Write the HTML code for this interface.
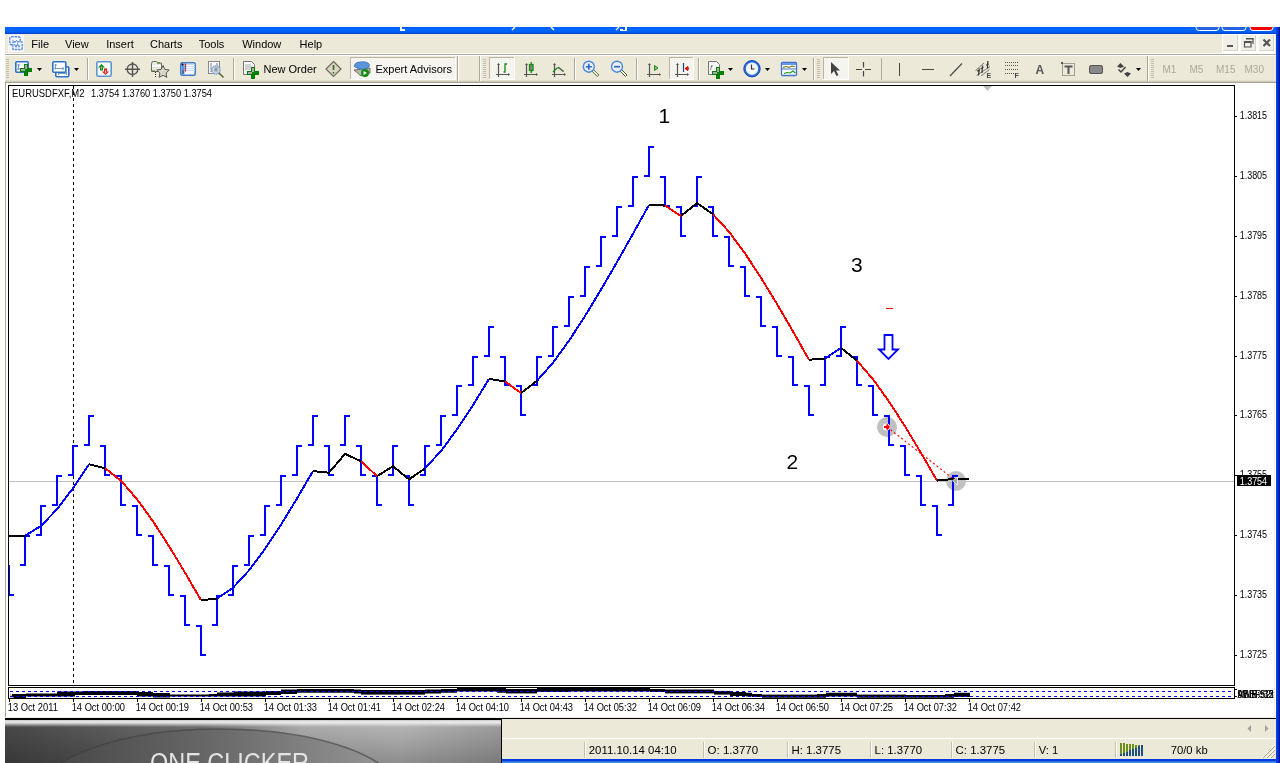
<!DOCTYPE html>
<html><head><meta charset="utf-8"><style>
html,body{margin:0;padding:0;background:#fff;width:1280px;height:763px;overflow:hidden;}
svg{position:absolute;left:0;top:0;will-change:transform;}
</style></head><body>
<svg width="1280" height="763" viewBox="0 0 1280 763">
<defs>
<linearGradient id="tb" x1="0" y1="0" x2="0" y2="1"><stop offset="0" stop-color="#0058F8"/><stop offset="0.25" stop-color="#0066FF"/><stop offset="0.7" stop-color="#0062F8"/><stop offset="1" stop-color="#003CC8"/></linearGradient>
<linearGradient id="rb" x1="0" y1="0" x2="1" y2="0"><stop offset="0" stop-color="#0046FF"/><stop offset="0.45" stop-color="#0034D8"/><stop offset="1" stop-color="#000E88"/></linearGradient>
</defs>
<rect x="5" y="27" width="1275" height="7" fill="url(#tb)" shape-rendering="crispEdges"/>
<rect x="1196" y="20" width="23" height="10.5" rx="3" fill="#2663E0" stroke="#FFF" stroke-width="1"/><rect x="1222" y="20" width="24" height="10.5" rx="3" fill="#2663E0" stroke="#FFF" stroke-width="1"/><rect x="1250" y="20" width="23" height="10.5" rx="3" fill="#F00000" stroke="#FFF" stroke-width="1"/><rect x="0" y="0" width="1280" height="27" fill="#FFFFFF" shape-rendering="crispEdges" /><rect x="400" y="27" width="2" height="3" fill="#FFF" shape-rendering="crispEdges" /><rect x="400" y="29" width="5" height="2" fill="#FFF" shape-rendering="crispEdges" /><path d="M515,27 l-3,3" stroke="#FFF" stroke-width="1.5"/><path d="M551,27 l3,3" stroke="#FFF" stroke-width="1.5"/><path d="M619,27 l-3,3" stroke="#FFF" stroke-width="1.5"/><rect x="620" y="29" width="3" height="2" fill="#FFF" shape-rendering="crispEdges" /><rect x="625" y="27" width="2" height="4" fill="#FFF" shape-rendering="crispEdges" /><rect x="622" y="30" width="5" height="1" fill="#FFF" shape-rendering="crispEdges" />
<rect x="1276" y="27" width="4" height="736" fill="url(#rb)" shape-rendering="crispEdges"/>
<rect x="5" y="34" width="1271" height="20" fill="#ECE9D8" shape-rendering="crispEdges"/>
<rect x="5" y="53" width="1271" height="1" fill="#FFFFFF" shape-rendering="crispEdges"/><rect x="5" y="54" width="1271" height="1" fill="#ACA899" shape-rendering="crispEdges"/>
<rect x="5" y="55" width="1271" height="1" fill="#FFFFFF" shape-rendering="crispEdges"/>
<rect x="8" y="35" width="16" height="17" fill="#F8F8F8" shape-rendering="crispEdges" /><rect x="9.8" y="36.8" width="10.4" height="8" rx="1.5" fill="#FFF" stroke="#5A8CF0" stroke-width="1.5" stroke-dasharray="2.5,0.8"/><path d="M12.5,41 l1,-1.2 M16,39.8 l1,1.2" stroke="#5A8CF0" stroke-width="1"/><rect x="12.8" y="41.8" width="9.4" height="7.6" rx="1" fill="#FFF" stroke="#5A8CF0" stroke-width="1.5" stroke-dasharray="2.5,0.8"/><path d="M14.5,44 l1.5,3 1.5,-3 1.5,3 1,-1.5" stroke="#5A8CF0" stroke-width="1.1" fill="none"/><text x="31.3" y="48" font-size="11" font-family="Liberation Sans, sans-serif" fill="#000">File</text><text x="65" y="48" font-size="11" font-family="Liberation Sans, sans-serif" fill="#000">View</text><text x="106.2" y="48" font-size="11" font-family="Liberation Sans, sans-serif" fill="#000">Insert</text><text x="150" y="48" font-size="11" font-family="Liberation Sans, sans-serif" fill="#000">Charts</text><text x="198.7" y="48" font-size="11" font-family="Liberation Sans, sans-serif" fill="#000">Tools</text><text x="242.2" y="48" font-size="11" font-family="Liberation Sans, sans-serif" fill="#000">Window</text><text x="299.6" y="48" font-size="11" font-family="Liberation Sans, sans-serif" fill="#000">Help</text><rect x="1222" y="34" width="53" height="19" fill="#FFFFFF" shape-rendering="crispEdges" /><rect x="1223" y="35" width="15" height="16" fill="#F1EFE6" shape-rendering="crispEdges" /><rect x="1223" y="50" width="15" height="1" fill="#D9D5C5" shape-rendering="crispEdges" /><rect x="1237" y="35" width="1" height="16" fill="#D9D5C5" shape-rendering="crispEdges" /><rect x="1241" y="35" width="15" height="16" fill="#F1EFE6" shape-rendering="crispEdges" /><rect x="1241" y="50" width="15" height="1" fill="#D9D5C5" shape-rendering="crispEdges" /><rect x="1255" y="35" width="1" height="16" fill="#D9D5C5" shape-rendering="crispEdges" /><rect x="1259" y="35" width="15" height="16" fill="#F1EFE6" shape-rendering="crispEdges" /><rect x="1259" y="50" width="15" height="1" fill="#D9D5C5" shape-rendering="crispEdges" /><rect x="1273" y="35" width="1" height="16" fill="#D9D5C5" shape-rendering="crispEdges" /><rect x="1227" y="45" width="6" height="2" fill="#555" shape-rendering="crispEdges" /><path d="M1244.5,41.5 h6.5 v5.5 h-6.5 z" fill="none" stroke="#555" stroke-width="1.2"/><rect x="1244" y="41" width="7.5" height="2" fill="#555"/><path d="M1246.5,38.5 h6.5 v5.5" fill="none" stroke="#555" stroke-width="1.2"/><rect x="1246" y="38" width="7.5" height="1.5" fill="#555"/><path d="M1263.5,39.5 l6.5,6.5 M1270,39.5 l-6.5,6.5" stroke="#555" stroke-width="2.2"/>
<rect x="5" y="56" width="1271" height="25" fill="#ECE9D8" shape-rendering="crispEdges"/>
<rect x="5" y="80" width="1271" height="1" fill="#E2DFCF" shape-rendering="crispEdges"/><rect x="5" y="81" width="1271" height="1" fill="#CFCBB8" shape-rendering="crispEdges"/><rect x="5" y="82" width="1271" height="1" fill="#A5A28F" shape-rendering="crispEdges"/>
<rect x="6" y="59" width="3" height="1" fill="#C1BDAA" shape-rendering="crispEdges" /><rect x="6" y="61" width="3" height="1" fill="#C1BDAA" shape-rendering="crispEdges" /><rect x="6" y="63" width="3" height="1" fill="#C1BDAA" shape-rendering="crispEdges" /><rect x="6" y="65" width="3" height="1" fill="#C1BDAA" shape-rendering="crispEdges" /><rect x="6" y="67" width="3" height="1" fill="#C1BDAA" shape-rendering="crispEdges" /><rect x="6" y="69" width="3" height="1" fill="#C1BDAA" shape-rendering="crispEdges" /><rect x="6" y="71" width="3" height="1" fill="#C1BDAA" shape-rendering="crispEdges" /><rect x="6" y="73" width="3" height="1" fill="#C1BDAA" shape-rendering="crispEdges" /><rect x="6" y="75" width="3" height="1" fill="#C1BDAA" shape-rendering="crispEdges" /><rect x="6" y="77" width="3" height="1" fill="#C1BDAA" shape-rendering="crispEdges" /><rect x="15.8" y="61.8" width="12.4" height="10.4" fill="#FFFFFF" stroke="#2E72C8" stroke-width="1.6" rx="1"/><path d="M18.5,64 v6 M17,65 h3 M17,69 h3" stroke="#7A9CC0" fill="none" stroke-width="1.1"/><path d="M24.0,64.0 h4.0 v4.0 h4.0 v4.0 h-4.0 v4.0 h-4.0 v-4.0 h-4.0 v-4.0 h4.0 z" fill="#008000" shape-rendering="crispEdges"/><rect x="25.0" y="65.0" width="2" height="4" fill="#B4A4AC" shape-rendering="crispEdges" /><rect x="21.0" y="69.0" width="4" height="2" fill="#ACA8B8" shape-rendering="crispEdges" /><path d="M37,68 h5 l-2.5,3 z" fill="#000"/><rect x="55.8" y="66.8" width="13" height="10" rx="1" fill="#FFF" stroke="#2E72C8" stroke-width="1.6"/><path d="M58,73.5 h9 M58.5,72 v3 M66.5,72 v3" stroke="#7A9CC0" stroke-width="1.1" fill="none"/><rect x="52.8" y="61.8" width="13" height="10.4" rx="1" fill="#FFF" stroke="#2E72C8" stroke-width="1.6"/><path d="M55.5,64 v5.5 M54,68.5 h10 M54.5,65 h2.5 M63,67 v3" stroke="#7A9CC0" stroke-width="1.1" fill="none"/><path d="M74,68 h5 l-2.5,3 z" fill="#000"/><rect x="87" y="58" width="1" height="22" fill="#ACA899" shape-rendering="crispEdges" /><rect x="88" y="58" width="1" height="22" fill="#FFFFFF" shape-rendering="crispEdges" /><rect x="96.8" y="61.8" width="14.4" height="14.4" rx="1.5" fill="#FFFFFF" stroke="#5C95D6" stroke-width="1.6"/><path d="M98,67.5 L101.5,64 L105,67.5 H103 V70.5 H100 V67.5 Z" fill="#0A8A0A"/><path d="M101.5,66 v3.5 M100.5,67.5 h2" stroke="#B0B0A0" stroke-width="0.8"/><path d="M102,71.5 L105.5,75 L109,71.5 H107 V68.5 H104 V71.5 Z" fill="#F01010"/><path d="M105.5,70 v3.5 M104.5,72 h2" stroke="#C0D0C0" stroke-width="0.8"/><g stroke="#555" fill="none"><circle cx="132.5" cy="69.3" r="5.3" stroke-width="1.3"/><path d="M132.5,62 v15 M125,69.3 h15" stroke-width="1.5"/></g><path d="M151.5,63.5 q0,-2 2,-2 h3 l1.5,1.5 h3.5 v8.5 h-10 z" fill="#E8E6DA" stroke="#666" stroke-width="1"/><rect x="152" y="65" width="9" height="2" fill="#FFF"/><path d="M152,71 h3 M157,63 h3" stroke="#4A7A10" stroke-width="1"/><path d="M155.5,72 v6" stroke="#333" stroke-dasharray="1,1" stroke-width="1"/><path d="M163,65.5 l1.9,3.9 4.3,.6 -3.1,3 .7,4.3 -3.8,-2 -3.8,2 .7,-4.3 -3.1,-3 4.3,-.6 z" fill="#D8D6C8" stroke="#555" stroke-width="1"/><rect x="180.8" y="62.8" width="14.4" height="12.4" rx="1.5" fill="#FFF" stroke="#3D7CC8" stroke-width="1.6"/><rect x="181.5" y="63.5" width="3" height="11" fill="#5E96E8"/><rect x="182.5" y="70" width="1" height="4" fill="#444"/><path d="M187,64.5 h8 M187,66.5 h8 M187,68.5 h8 M187,70.5 h8" stroke="#C8DAF4" stroke-width="1"/><circle cx="185.5" cy="64.5" r="0.9" fill="#F00"/><circle cx="185.5" cy="66.5" r="0.9" fill="#444"/><circle cx="185.5" cy="68.5" r="0.9" fill="#444"/><circle cx="185.5" cy="70.5" r="0.9" fill="#F00"/><circle cx="182.5" cy="64.5" r="0.9" fill="#000"/><rect x="208.5" y="61.5" width="11" height="12" fill="#FAFAFA" stroke="#888" stroke-width="1"/><path d="M211,63 v9 M217,63 v4" stroke="#7A8AA0" stroke-width="1"/><circle cx="216" cy="70" r="4.2" fill="#C8D4E4" stroke="#6E96D0" stroke-width="1.2" stroke-dasharray="1.2,0.6"/><rect x="214.5" y="67.5" width="3" height="4" fill="#9A9A9A"/><path d="M219,73 l4.5,4.5" stroke="#556B2F" stroke-width="1.6"/><rect x="233" y="58" width="1" height="22" fill="#ACA899" shape-rendering="crispEdges" /><rect x="234" y="58" width="1" height="22" fill="#FFFFFF" shape-rendering="crispEdges" /><path d="M243.5,61.5 h8 l3,3 v10 h-11 z" fill="#F7F7F7" stroke="#777" stroke-width="1"/><path d="M245,65 h6 M245,67 h7 M245,69 h6" stroke="#999" stroke-width="0.8"/><path d="M251.0,67.0 h4.0 v4.0 h4.0 v4.0 h-4.0 v4.0 h-4.0 v-4.0 h-4.0 v-4.0 h4.0 z" fill="#008000" shape-rendering="crispEdges"/><rect x="252.0" y="68.0" width="2" height="4" fill="#B4A4AC" shape-rendering="crispEdges" /><rect x="248.0" y="72.0" width="4" height="2" fill="#ACA8B8" shape-rendering="crispEdges" /><text x="263.5" y="73" font-size="11" font-family="Liberation Sans, sans-serif" fill="#000">New Order</text><path d="M333.5,61.5 l7.5,7.5 -7.5,7.5 -7.5,-7.5 z" fill="#DAD7C8" stroke="#6A6A50" stroke-width="1.2"/><path d="M333.5,65 v5 M333.5,72 v1.5" stroke="#3A6A1A" stroke-width="1.6"/><rect x="350" y="57" width="106" height="23" fill="#F5F4EF" shape-rendering="crispEdges" /><rect x="350" y="57" width="106" height="1" fill="#B9B5A4" shape-rendering="crispEdges" /><rect x="350" y="57" width="1" height="23" fill="#B9B5A4" shape-rendering="crispEdges" /><rect x="350" y="79" width="106" height="1" fill="#FFFFFF" shape-rendering="crispEdges" /><rect x="455" y="57" width="1" height="23" fill="#FFFFFF" shape-rendering="crispEdges" /><path d="M354,70 l7,6 l9,-3 v-5 z" fill="#B8B8A8" stroke="#555" stroke-width="0.8"/><path d="M354,66 q1,-4 6,-4 q5,-1 8,1 q2,1 1,4 l-5,2 q-6,1 -10,-3 z" fill="#5A96DC" stroke="#3A70B8" stroke-width="0.8"/><circle cx="365" cy="73" r="4" fill="#118A11"/><path d="M363.5,71 v4 l3.5,-2 z" fill="#FFF"/><text x="375.5" y="73" font-size="11" font-family="Liberation Sans, sans-serif" fill="#000">Expert Advisors</text><rect x="457" y="56" width="1" height="25" fill="#ACA899" shape-rendering="crispEdges" /><rect x="458" y="56" width="1" height="25" fill="#FFFFFF" shape-rendering="crispEdges" /><rect x="479" y="56" width="1" height="25" fill="#ACA899" shape-rendering="crispEdges" /><rect x="480" y="56" width="1" height="25" fill="#FFFFFF" shape-rendering="crispEdges" /><rect x="483" y="59" width="3" height="1" fill="#C1BDAA" shape-rendering="crispEdges" /><rect x="483" y="61" width="3" height="1" fill="#C1BDAA" shape-rendering="crispEdges" /><rect x="483" y="63" width="3" height="1" fill="#C1BDAA" shape-rendering="crispEdges" /><rect x="483" y="65" width="3" height="1" fill="#C1BDAA" shape-rendering="crispEdges" /><rect x="483" y="67" width="3" height="1" fill="#C1BDAA" shape-rendering="crispEdges" /><rect x="483" y="69" width="3" height="1" fill="#C1BDAA" shape-rendering="crispEdges" /><rect x="483" y="71" width="3" height="1" fill="#C1BDAA" shape-rendering="crispEdges" /><rect x="483" y="73" width="3" height="1" fill="#C1BDAA" shape-rendering="crispEdges" /><rect x="483" y="75" width="3" height="1" fill="#C1BDAA" shape-rendering="crispEdges" /><rect x="483" y="77" width="3" height="1" fill="#C1BDAA" shape-rendering="crispEdges" /><rect x="489" y="57" width="26" height="23" fill="#F5F4EF" shape-rendering="crispEdges" /><rect x="489" y="57" width="26" height="1" fill="#B9B5A4" shape-rendering="crispEdges" /><rect x="489" y="57" width="1" height="23" fill="#B9B5A4" shape-rendering="crispEdges" /><rect x="489" y="79" width="26" height="1" fill="#FFFFFF" shape-rendering="crispEdges" /><rect x="514" y="57" width="1" height="23" fill="#FFFFFF" shape-rendering="crispEdges" /><path d="M498.5,64 v13 M496,74.5 h13" stroke="#555" stroke-width="1.2" fill="none"/><path d="M497,65 l1.5,-2 1.5,2 z M508,73 l2,1.5 -2,1.5 z" fill="#555"/><path d="M503.5,72 h1.5 v-8 h2" stroke="#118A11" stroke-width="1.3" fill="none"/><path d="M526.5,64 v13 M524,74.5 h13" stroke="#555" stroke-width="1.2" fill="none"/><path d="M525,65 l1.5,-2 1.5,2 z M536,73 l2,1.5 -2,1.5 z" fill="#555"/><rect x="529.5" y="64.5" width="3.5" height="6" fill="#888" stroke="#118A11" stroke-width="1.3"/><path d="M531.2,62 v2 M531.2,71 v2" stroke="#118A11" stroke-width="1.3"/><path d="M554.5,64 v13 M552,74.5 h13" stroke="#555" stroke-width="1.2" fill="none"/><path d="M553,65 l1.5,-2 1.5,2 z M564,73 l2,1.5 -2,1.5 z" fill="#555"/><path d="M553,72 l3.5,-3.5 l2,-1 l5,4" stroke="#118A11" stroke-width="1.2" fill="none"/><path d="M558.5,67.5 l5,4" stroke="#666" stroke-width="1.2"/><rect x="574" y="58" width="1" height="22" fill="#ACA899" shape-rendering="crispEdges" /><rect x="575" y="58" width="1" height="22" fill="#FFFFFF" shape-rendering="crispEdges" /><path d="M591.8,71 l5.5,5.5 l1.5,-1.5 l-5.5,-5.5 z" fill="#FFF" stroke="#4A6A1A" stroke-width="1"/><circle cx="588.8" cy="66.7" r="5.5" fill="#E6EEFA" stroke="#4C86DA" stroke-width="1.4"/><path d="M585.8,66.7 h6 M588.8,63.7 v6" stroke="#2D64C0" stroke-width="1.6"/><path d="M620,71 l5.5,5.5 l1.5,-1.5 l-5.5,-5.5 z" fill="#FFF" stroke="#4A6A1A" stroke-width="1"/><circle cx="617" cy="66.7" r="5.5" fill="#E6EEFA" stroke="#4C86DA" stroke-width="1.4"/><path d="M614,66.7 h6" stroke="#2D64C0" stroke-width="1.6"/><rect x="636" y="58" width="1" height="22" fill="#ACA899" shape-rendering="crispEdges" /><rect x="637" y="58" width="1" height="22" fill="#FFFFFF" shape-rendering="crispEdges" /><path d="M649.5,64 v13 M647,74.5 h13" stroke="#555" stroke-width="1.2" fill="none"/><path d="M648,65 l1.5,-2 1.5,2 z M659,73 l2,1.5 -2,1.5 z" fill="#555"/><path d="M654.5,65.5 v5 l3.5,-2.5 z" fill="#AAA" stroke="#118A11" stroke-width="1"/><rect x="669" y="57" width="25" height="23" fill="#F5F4EF" shape-rendering="crispEdges" /><rect x="669" y="57" width="25" height="1" fill="#B9B5A4" shape-rendering="crispEdges" /><rect x="669" y="57" width="1" height="23" fill="#B9B5A4" shape-rendering="crispEdges" /><rect x="669" y="79" width="25" height="1" fill="#FFFFFF" shape-rendering="crispEdges" /><rect x="693" y="57" width="1" height="23" fill="#FFFFFF" shape-rendering="crispEdges" /><path d="M677.5,64 v13 M675,74.5 h13" stroke="#555" stroke-width="1.2" fill="none"/><path d="M676,65 l1.5,-2 1.5,2 z M687,73 l2,1.5 -2,1.5 z" fill="#555"/><path d="M683.5,63 v9" stroke="#1A4A70" stroke-width="1.2"/><path d="M685,68.5 l3,-2 v4 z M686,68.5 h3" fill="#E01010" stroke="#E01010" stroke-width="1"/><rect x="698" y="58" width="1" height="22" fill="#ACA899" shape-rendering="crispEdges" /><rect x="699" y="58" width="1" height="22" fill="#FFFFFF" shape-rendering="crispEdges" /><path d="M708.5,61.5 h8 l3,3 v10 h-11 z" fill="#F7F7F7" stroke="#777" stroke-width="1"/><text x="710" y="70" font-size="8" font-style="italic" font-family="Liberation Sans, sans-serif" fill="#666">f</text><path d="M716.0,67.0 h4.0 v4.0 h4.0 v4.0 h-4.0 v4.0 h-4.0 v-4.0 h-4.0 v-4.0 h4.0 z" fill="#008000" shape-rendering="crispEdges"/><rect x="717.0" y="68.0" width="2" height="4" fill="#B4A4AC" shape-rendering="crispEdges" /><rect x="713.0" y="72.0" width="4" height="2" fill="#ACA8B8" shape-rendering="crispEdges" /><path d="M728,68 h5 l-2.5,3 z" fill="#000"/><circle cx="752" cy="68.7" r="7.2" fill="#F4F6FA" stroke="#2F6EE8" stroke-width="2"/><circle cx="752" cy="68.7" r="8.2" fill="none" stroke="#0A3A9E" stroke-width="0.9"/><path d="M751.5,64.5 v4.5 h3" stroke="#333" stroke-width="1.2" fill="none"/><path d="M765,68 h5 l-2.5,3 z" fill="#000"/><rect x="781.5" y="62.5" width="15" height="13" rx="1" fill="#FFF" stroke="#3D74CF" stroke-width="1.3"/><rect x="782" y="63" width="14" height="2" fill="#6A9BEA"/><path d="M782,69 h14" stroke="#3D74CF" stroke-width="1"/><path d="M783,67.5 l3,-1 3,1 3,-1.5 3,0.5" stroke="#6A7A10" stroke-width="1.1" fill="none"/><path d="M784,73.5 l3,-1 3,0.5 3,-2 2.5,2" stroke="#189818" stroke-width="1.1" fill="none"/><path d="M802,68 h5 l-2.5,3 z" fill="#000"/><rect x="813" y="58" width="1" height="22" fill="#ACA899" shape-rendering="crispEdges" /><rect x="814" y="58" width="1" height="22" fill="#FFFFFF" shape-rendering="crispEdges" /><rect x="817" y="59" width="3" height="1" fill="#C1BDAA" shape-rendering="crispEdges" /><rect x="817" y="61" width="3" height="1" fill="#C1BDAA" shape-rendering="crispEdges" /><rect x="817" y="63" width="3" height="1" fill="#C1BDAA" shape-rendering="crispEdges" /><rect x="817" y="65" width="3" height="1" fill="#C1BDAA" shape-rendering="crispEdges" /><rect x="817" y="67" width="3" height="1" fill="#C1BDAA" shape-rendering="crispEdges" /><rect x="817" y="69" width="3" height="1" fill="#C1BDAA" shape-rendering="crispEdges" /><rect x="817" y="71" width="3" height="1" fill="#C1BDAA" shape-rendering="crispEdges" /><rect x="817" y="73" width="3" height="1" fill="#C1BDAA" shape-rendering="crispEdges" /><rect x="817" y="75" width="3" height="1" fill="#C1BDAA" shape-rendering="crispEdges" /><rect x="817" y="77" width="3" height="1" fill="#C1BDAA" shape-rendering="crispEdges" /><rect x="823" y="57" width="26" height="23" fill="#F5F4EF" shape-rendering="crispEdges" /><rect x="823" y="57" width="26" height="1" fill="#B9B5A4" shape-rendering="crispEdges" /><rect x="823" y="57" width="1" height="23" fill="#B9B5A4" shape-rendering="crispEdges" /><rect x="823" y="79" width="26" height="1" fill="#FFFFFF" shape-rendering="crispEdges" /><rect x="848" y="57" width="1" height="23" fill="#FFFFFF" shape-rendering="crispEdges" /><path d="M831,62 v12 l3,-3 l2.5,5 l2,-1 l-2.5,-4.5 h4 z" fill="#444"/><path d="M863.5,62 v5.5 M863.5,71 v5.5 M856,69.5 h6 M865,69.5 h6" stroke="#444" stroke-width="1.2"/><rect x="881" y="58" width="1" height="22" fill="#ACA899" shape-rendering="crispEdges" /><rect x="899" y="63" width="1" height="13" fill="#444" shape-rendering="crispEdges" /><rect x="922" y="69" width="12" height="1" fill="#444" shape-rendering="crispEdges" /><path d="M950,76 L962,63.5" stroke="#444" stroke-width="1.1"/><path d="M975.5,70.5 L984,63 M976.5,75.5 L990,66.5 M981,76 L989.5,69.5" stroke="#6A6A6A" stroke-width="0.9" fill="none"/><path d="M978.5,75.5 q0.5,-4 0.8,-7 M982,73 q0.2,-4 0.6,-7.5 M987.6,68.5 q-0.3,-4 0.3,-7.5 M977,71 l3,-1 M980.5,68.5 l3,-1 M986,65 l3,-1" stroke="#383838" stroke-width="1.3" fill="none"/><text x="986.5" y="78" font-size="7" font-weight="bold" font-family="Liberation Sans, sans-serif" fill="#444">E</text><path d="M1005,62.5 h14 M1005,65.5 h14 M1005,69.5 h14 M1005,73.5 h9" stroke="#555" stroke-width="1" stroke-dasharray="1,1" fill="none"/><text x="1014.5" y="78" font-size="7" font-weight="bold" font-family="Liberation Sans, sans-serif" fill="#444">F</text><text x="1035.5" y="74" font-size="12" font-weight="bold" font-family="Liberation Sans, sans-serif" fill="#555">A</text><rect x="1062.5" y="63.5" width="12" height="12" fill="none" stroke="#555" stroke-width="1" stroke-dasharray="1,1"/><rect x="1061" y="62" width="2" height="2" fill="#555"/><path d="M1064.5,66.5 h8 M1068.5,66.5 v7.5" stroke="#555" stroke-width="2" fill="none"/><rect x="1089.5" y="65.5" width="13" height="8" rx="1.5" fill="#888" stroke="#555" stroke-width="1"/><path d="M1117,66.5 l3.5,-3.5 3.5,3.5 -3.5,1.5 z M1124,73.5 l3.5,-1.5 3.5,1.5 -3.5,3.5 z" fill="#444"/><path d="M1118.5,69.5 l2.5,2.5 4.5,-5" stroke="#444" stroke-width="1.5" fill="none"/><path d="M1136,68 h5 l-2.5,3 z" fill="#000"/><rect x="1147" y="56" width="1" height="25" fill="#ACA899" shape-rendering="crispEdges" /><rect x="1148" y="56" width="1" height="25" fill="#FFFFFF" shape-rendering="crispEdges" /><rect x="1151" y="59" width="3" height="1" fill="#C1BDAA" shape-rendering="crispEdges" /><rect x="1151" y="61" width="3" height="1" fill="#C1BDAA" shape-rendering="crispEdges" /><rect x="1151" y="63" width="3" height="1" fill="#C1BDAA" shape-rendering="crispEdges" /><rect x="1151" y="65" width="3" height="1" fill="#C1BDAA" shape-rendering="crispEdges" /><rect x="1151" y="67" width="3" height="1" fill="#C1BDAA" shape-rendering="crispEdges" /><rect x="1151" y="69" width="3" height="1" fill="#C1BDAA" shape-rendering="crispEdges" /><rect x="1151" y="71" width="3" height="1" fill="#C1BDAA" shape-rendering="crispEdges" /><rect x="1151" y="73" width="3" height="1" fill="#C1BDAA" shape-rendering="crispEdges" /><rect x="1151" y="75" width="3" height="1" fill="#C1BDAA" shape-rendering="crispEdges" /><rect x="1151" y="77" width="3" height="1" fill="#C1BDAA" shape-rendering="crispEdges" /><text x="1162.5" y="73" font-size="10" font-family="Liberation Sans, sans-serif" fill="#ACA899">M1</text><text x="1189.5" y="73" font-size="10" font-family="Liberation Sans, sans-serif" fill="#ACA899">M5</text><text x="1216" y="73" font-size="10" font-family="Liberation Sans, sans-serif" fill="#ACA899">M15</text><text x="1244.5" y="73" font-size="10" font-family="Liberation Sans, sans-serif" fill="#ACA899">M30</text>
<rect x="5" y="83" width="1271" height="634" fill="#FFFFFF" shape-rendering="crispEdges"/>
<rect x="5" y="83" width="1" height="634" fill="#ACA899" shape-rendering="crispEdges"/>
<rect x="1274" y="83" width="1" height="634" fill="#F1EFE2" shape-rendering="crispEdges"/>
<g fill="none" stroke="#000" stroke-width="1" shape-rendering="crispEdges">
<rect x="8.5" y="85.5" width="1226" height="600"/>
<rect x="8.5" y="687.5" width="1226" height="11"/>
</g>
<text x="12" y="97" font-size="10.3" font-family="Liberation Sans, sans-serif" fill="#000" textLength="72.5" lengthAdjust="spacingAndGlyphs" >EURUSDFXF,M2</text><text x="91" y="97" font-size="10.3" font-family="Liberation Sans, sans-serif" fill="#000" textLength="121" lengthAdjust="spacingAndGlyphs" >1.3754&#160;1.3760&#160;1.3750&#160;1.3754</text>
<rect x="9" y="481" width="1225" height="1" fill="#C0C0C0" shape-rendering="crispEdges"/>
<line x1="73.5" y1="86" x2="73.5" y2="685" stroke="#000" stroke-width="1" stroke-dasharray="3,3" shape-rendering="crispEdges"/>
<path d="M983,86 h9 l-4.5,5 z" fill="#C0C0C0"/>
<g font-size="21" font-family="Liberation Sans, sans-serif" fill="#000"><text x="658.5" y="123">1</text><text x="786.5" y="469.3">2</text><text x="851" y="271.8">3</text></g><rect x="886" y="308" width="7" height="1" fill="#FF0000" shape-rendering="crispEdges" /><path d="M884.5,335 H892.5 V349.5 H898 L888.5,359 L879,349.5 H884.5 Z" fill="#FFF" stroke="#0000FF" stroke-width="1.8" stroke-linejoin="miter" stroke-miterlimit="3"/><circle cx="887" cy="427" r="10" fill="#C0C0C0"/><circle cx="956" cy="481" r="10" fill="#C0C0C0"/><line x1="887" y1="427" x2="956" y2="481" stroke="#FF0000" stroke-width="1.2" stroke-dasharray="2,2.5"/>
<clipPath id="cc"><rect x="9" y="86" width="1225" height="599"/></clipPath><g clip-path="url(#cc)"><g fill="#0000FF" shape-rendering="crispEdges"><rect x="8" y="565" width="2" height="31"/><rect x="4" y="565" width="6" height="2"/><rect x="8" y="594" width="6" height="2"/><rect x="24" y="535" width="2" height="31"/><rect x="20" y="564" width="6" height="2"/><rect x="24" y="535" width="6" height="2"/><rect x="40" y="505" width="2" height="31"/><rect x="36" y="534" width="6" height="2"/><rect x="40" y="505" width="6" height="2"/><rect x="56" y="475" width="2" height="31"/><rect x="52" y="504" width="6" height="2"/><rect x="56" y="475" width="6" height="2"/><rect x="72" y="445" width="2" height="31"/><rect x="68" y="474" width="6" height="2"/><rect x="72" y="445" width="6" height="2"/><rect x="88" y="415" width="2" height="31"/><rect x="84" y="444" width="6" height="2"/><rect x="88" y="415" width="6" height="2"/><rect x="104" y="445" width="2" height="31"/><rect x="100" y="445" width="6" height="2"/><rect x="104" y="474" width="6" height="2"/><rect x="120" y="475" width="2" height="31"/><rect x="116" y="475" width="6" height="2"/><rect x="120" y="504" width="6" height="2"/><rect x="136" y="505" width="2" height="31"/><rect x="132" y="505" width="6" height="2"/><rect x="136" y="534" width="6" height="2"/><rect x="152" y="535" width="2" height="31"/><rect x="148" y="535" width="6" height="2"/><rect x="152" y="564" width="6" height="2"/><rect x="168" y="565" width="2" height="31"/><rect x="164" y="565" width="6" height="2"/><rect x="168" y="594" width="6" height="2"/><rect x="184" y="595" width="2" height="31"/><rect x="180" y="595" width="6" height="2"/><rect x="184" y="624" width="6" height="2"/><rect x="200" y="625" width="2" height="31"/><rect x="196" y="625" width="6" height="2"/><rect x="200" y="654" width="6" height="2"/><rect x="216" y="595" width="2" height="31"/><rect x="212" y="624" width="6" height="2"/><rect x="216" y="595" width="6" height="2"/><rect x="232" y="565" width="2" height="31"/><rect x="228" y="594" width="6" height="2"/><rect x="232" y="565" width="6" height="2"/><rect x="248" y="535" width="2" height="31"/><rect x="244" y="564" width="6" height="2"/><rect x="248" y="535" width="6" height="2"/><rect x="264" y="505" width="2" height="31"/><rect x="260" y="534" width="6" height="2"/><rect x="264" y="505" width="6" height="2"/><rect x="280" y="475" width="2" height="31"/><rect x="276" y="504" width="6" height="2"/><rect x="280" y="475" width="6" height="2"/><rect x="296" y="445" width="2" height="31"/><rect x="292" y="474" width="6" height="2"/><rect x="296" y="445" width="6" height="2"/><rect x="312" y="415" width="2" height="31"/><rect x="308" y="444" width="6" height="2"/><rect x="312" y="415" width="6" height="2"/><rect x="328" y="445" width="2" height="31"/><rect x="324" y="445" width="6" height="2"/><rect x="328" y="474" width="6" height="2"/><rect x="344" y="415" width="2" height="31"/><rect x="340" y="444" width="6" height="2"/><rect x="344" y="415" width="6" height="2"/><rect x="360" y="445" width="2" height="31"/><rect x="356" y="445" width="6" height="2"/><rect x="360" y="474" width="6" height="2"/><rect x="376" y="475" width="2" height="31"/><rect x="372" y="475" width="6" height="2"/><rect x="376" y="504" width="6" height="2"/><rect x="392" y="445" width="2" height="31"/><rect x="388" y="474" width="6" height="2"/><rect x="392" y="445" width="6" height="2"/><rect x="408" y="475" width="2" height="31"/><rect x="404" y="475" width="6" height="2"/><rect x="408" y="504" width="6" height="2"/><rect x="424" y="445" width="2" height="31"/><rect x="420" y="474" width="6" height="2"/><rect x="424" y="445" width="6" height="2"/><rect x="440" y="415" width="2" height="31"/><rect x="436" y="444" width="6" height="2"/><rect x="440" y="415" width="6" height="2"/><rect x="456" y="385" width="2" height="31"/><rect x="452" y="414" width="6" height="2"/><rect x="456" y="385" width="6" height="2"/><rect x="472" y="356" width="2" height="30"/><rect x="468" y="384" width="6" height="2"/><rect x="472" y="356" width="6" height="2"/><rect x="488" y="326" width="2" height="31"/><rect x="484" y="355" width="6" height="2"/><rect x="488" y="326" width="6" height="2"/><rect x="504" y="356" width="2" height="30"/><rect x="500" y="356" width="6" height="2"/><rect x="504" y="384" width="6" height="2"/><rect x="520" y="385" width="2" height="31"/><rect x="516" y="385" width="6" height="2"/><rect x="520" y="414" width="6" height="2"/><rect x="536" y="356" width="2" height="30"/><rect x="532" y="384" width="6" height="2"/><rect x="536" y="356" width="6" height="2"/><rect x="552" y="326" width="2" height="31"/><rect x="548" y="355" width="6" height="2"/><rect x="552" y="326" width="6" height="2"/><rect x="568" y="296" width="2" height="31"/><rect x="564" y="325" width="6" height="2"/><rect x="568" y="296" width="6" height="2"/><rect x="584" y="266" width="2" height="31"/><rect x="580" y="295" width="6" height="2"/><rect x="584" y="266" width="6" height="2"/><rect x="600" y="236" width="2" height="31"/><rect x="596" y="265" width="6" height="2"/><rect x="600" y="236" width="6" height="2"/><rect x="616" y="206" width="2" height="31"/><rect x="612" y="235" width="6" height="2"/><rect x="616" y="206" width="6" height="2"/><rect x="632" y="176" width="2" height="31"/><rect x="628" y="205" width="6" height="2"/><rect x="632" y="176" width="6" height="2"/><rect x="648" y="146" width="2" height="31"/><rect x="644" y="175" width="6" height="2"/><rect x="648" y="146" width="6" height="2"/><rect x="664" y="176" width="2" height="31"/><rect x="660" y="176" width="6" height="2"/><rect x="664" y="205" width="6" height="2"/><rect x="680" y="206" width="2" height="31"/><rect x="676" y="206" width="6" height="2"/><rect x="680" y="235" width="6" height="2"/><rect x="696" y="176" width="2" height="31"/><rect x="692" y="205" width="6" height="2"/><rect x="696" y="176" width="6" height="2"/><rect x="712" y="206" width="2" height="31"/><rect x="708" y="206" width="6" height="2"/><rect x="712" y="235" width="6" height="2"/><rect x="728" y="236" width="2" height="31"/><rect x="724" y="236" width="6" height="2"/><rect x="728" y="265" width="6" height="2"/><rect x="744" y="266" width="2" height="31"/><rect x="740" y="266" width="6" height="2"/><rect x="744" y="295" width="6" height="2"/><rect x="760" y="296" width="2" height="31"/><rect x="756" y="296" width="6" height="2"/><rect x="760" y="325" width="6" height="2"/><rect x="776" y="326" width="2" height="31"/><rect x="772" y="326" width="6" height="2"/><rect x="776" y="355" width="6" height="2"/><rect x="792" y="356" width="2" height="30"/><rect x="788" y="356" width="6" height="2"/><rect x="792" y="384" width="6" height="2"/><rect x="808" y="385" width="2" height="31"/><rect x="804" y="385" width="6" height="2"/><rect x="808" y="414" width="6" height="2"/><rect x="824" y="356" width="2" height="30"/><rect x="820" y="384" width="6" height="2"/><rect x="824" y="356" width="6" height="2"/><rect x="840" y="326" width="2" height="31"/><rect x="836" y="355" width="6" height="2"/><rect x="840" y="326" width="6" height="2"/><rect x="856" y="356" width="2" height="30"/><rect x="852" y="356" width="6" height="2"/><rect x="856" y="384" width="6" height="2"/><rect x="872" y="385" width="2" height="31"/><rect x="868" y="385" width="6" height="2"/><rect x="872" y="414" width="6" height="2"/><rect x="888" y="415" width="2" height="31"/><rect x="884" y="415" width="6" height="2"/><rect x="888" y="444" width="6" height="2"/><rect x="904" y="445" width="2" height="31"/><rect x="900" y="445" width="6" height="2"/><rect x="904" y="474" width="6" height="2"/><rect x="920" y="475" width="2" height="31"/><rect x="916" y="475" width="6" height="2"/><rect x="920" y="504" width="6" height="2"/><rect x="936" y="505" width="2" height="31"/><rect x="932" y="505" width="6" height="2"/><rect x="936" y="534" width="6" height="2"/><rect x="952" y="475" width="2" height="31"/><rect x="948" y="504" width="6" height="2"/><rect x="952" y="475" width="6" height="2"/></g>
<g fill="none" stroke-width="2" stroke-linejoin="round" shape-rendering="crispEdges"><polyline points="9,535.85 25,535.85" stroke="#000000"/><polyline points="25,535.85 41,525.8833333333333 57,509.2722222222222 73,488.23148148148147 89,464.23765432098764" stroke="#0000FF"/><polyline points="89,464.23765432098764 105,468.1751028806584" stroke="#000000"/><polyline points="105,468.1751028806584 121,480.76673525377225 137,499.12782350251484 153,521.3352156683433 169,546.1068104455621 185,572.5878736303747 201,600.2085824202499" stroke="#FF0000"/><polyline points="201,600.2085824202499 217,598.6890549468332" stroke="#000000"/><polyline points="217,598.6890549468332 233,587.7093699645554 249,570.4229133097036 265,548.9319422064691 281,524.6379614709793 297,498.4753076473196 313,471.0668717648797" stroke="#0000FF"/><polyline points="313,471.0668717648797 329,472.7279145099198 345,453.9019430066132 361,461.28462867107544" stroke="#000000"/><polyline points="361,461.28462867107544 377,476.173085780717" stroke="#FF0000"/><polyline points="377,476.173085780717 393,466.16539052047796 409,479.42692701365195 425,468.3346180091013" stroke="#000000"/><polyline points="425,468.3346180091013 441,450.9730786727342 457,429.43205244848946 473,405.1047016323263 489,378.9198010882175" stroke="#0000FF"/><polyline points="489,378.9198010882175 505,381.39653405881165" stroke="#000000"/><polyline points="505,381.39653405881165 521,393.01435603920777" stroke="#FF0000"/><polyline points="521,393.01435603920777 537,380.82623735947186" stroke="#000000"/><polyline points="537,380.82623735947186 553,362.73415823964785 569,340.70610549309856 585,316.05407032873234 601,289.65271355248825 617,262.0851423683255 633,233.74009491221702 649,204.87672994147803" stroke="#0000FF"/><polyline points="649,204.87672994147803 665,205.56781996098536" stroke="#000000"/><polyline points="665,205.56781996098536 681,215.99521330732358" stroke="#FF0000"/><polyline points="681,215.99521330732358 697,203.01347553821572 713,214.29231702547713" stroke="#000000"/><polyline points="713,214.29231702547713 729,231.7782113503181 745,253.40214090021203 761,277.78476060014134 777,304.0065070667609 793,331.45433804450727 809,359.71955869633814" stroke="#FF0000"/><polyline points="809,359.71955869633814 825,358.6297057975588" stroke="#000000"/><polyline points="825,358.6297057975588 841,347.9364705317058" stroke="#0000FF"/><polyline points="841,347.9364705317058 857,360.74098035447054" stroke="#000000"/><polyline points="857,360.74098035447054 873,379.2439869029804 889,401.54599126865355 905,426.38066084576906 921,452.90377389717935 937,480.5525159314529" stroke="#FF0000"/><polyline points="937,480.5525159314529 953,479.05167728763524 969,479.3" stroke="#000000"/></g></g>
<circle cx="886.5" cy="427" r="3.6" fill="#FFF"/><path d="M884,426 h2 l1,-2.5 l3,3.5 l-3,3.5 l-1,-2.5 h-2 z" fill="#FF0000"/><path d="M957.5,477 v8 l-5,-4.3 z" fill="#A8A698" stroke="#FFF" stroke-width="0.7"/>
<rect x="1235" y="116" width="2" height="1" fill="#000" shape-rendering="crispEdges"/><text x="1239.7" y="119" font-size="10.3" font-family="Liberation Sans, sans-serif" fill="#000" textLength="27.4" lengthAdjust="spacingAndGlyphs" >1.3815</text><rect x="1235" y="176" width="2" height="1" fill="#000" shape-rendering="crispEdges"/><text x="1239.7" y="179" font-size="10.3" font-family="Liberation Sans, sans-serif" fill="#000" textLength="27.4" lengthAdjust="spacingAndGlyphs" >1.3805</text><rect x="1235" y="236" width="2" height="1" fill="#000" shape-rendering="crispEdges"/><text x="1239.7" y="239" font-size="10.3" font-family="Liberation Sans, sans-serif" fill="#000" textLength="27.4" lengthAdjust="spacingAndGlyphs" >1.3795</text><rect x="1235" y="296" width="2" height="1" fill="#000" shape-rendering="crispEdges"/><text x="1239.7" y="299" font-size="10.3" font-family="Liberation Sans, sans-serif" fill="#000" textLength="27.4" lengthAdjust="spacingAndGlyphs" >1.3785</text><rect x="1235" y="356" width="2" height="1" fill="#000" shape-rendering="crispEdges"/><text x="1239.7" y="359" font-size="10.3" font-family="Liberation Sans, sans-serif" fill="#000" textLength="27.4" lengthAdjust="spacingAndGlyphs" >1.3775</text><rect x="1235" y="415" width="2" height="1" fill="#000" shape-rendering="crispEdges"/><text x="1239.7" y="418" font-size="10.3" font-family="Liberation Sans, sans-serif" fill="#000" textLength="27.4" lengthAdjust="spacingAndGlyphs" >1.3765</text><rect x="1235" y="475" width="2" height="1" fill="#000" shape-rendering="crispEdges"/><text x="1239.7" y="478" font-size="10.3" font-family="Liberation Sans, sans-serif" fill="#000" textLength="27.4" lengthAdjust="spacingAndGlyphs" >1.3755</text><rect x="1235" y="535" width="2" height="1" fill="#000" shape-rendering="crispEdges"/><text x="1239.7" y="538" font-size="10.3" font-family="Liberation Sans, sans-serif" fill="#000" textLength="27.4" lengthAdjust="spacingAndGlyphs" >1.3745</text><rect x="1235" y="595" width="2" height="1" fill="#000" shape-rendering="crispEdges"/><text x="1239.7" y="598" font-size="10.3" font-family="Liberation Sans, sans-serif" fill="#000" textLength="27.4" lengthAdjust="spacingAndGlyphs" >1.3735</text><rect x="1235" y="655" width="2" height="1" fill="#000" shape-rendering="crispEdges"/><text x="1239.7" y="658" font-size="10.3" font-family="Liberation Sans, sans-serif" fill="#000" textLength="27.4" lengthAdjust="spacingAndGlyphs" >1.3725</text>
<rect x="1237" y="475" width="34" height="11" fill="#000" shape-rendering="crispEdges" /><rect x="1235" y="476" width="2" height="5" fill="#FFF" shape-rendering="crispEdges" /><text x="1239.7" y="484.5" font-size="10.3" font-family="Liberation Sans, sans-serif" fill="#FFF" textLength="27.4" lengthAdjust="spacingAndGlyphs" >1.3754</text>
<g fill="#000"><rect x="12" y="694" width="14" height="4"/><rect x="26" y="693.5" width="31" height="3.0"/><rect x="57" y="691.5" width="18" height="5.0"/><rect x="75" y="691.5" width="10" height="3.5"/><rect x="85" y="691" width="52" height="4"/><rect x="137" y="692" width="16" height="4.5"/><rect x="153" y="693" width="17" height="4.5"/><rect x="170" y="694.5" width="39" height="2.0"/><rect x="209" y="694" width="8" height="2.5"/><rect x="217" y="692.5" width="17" height="4.0"/><rect x="234" y="691.5" width="32" height="5.0"/><rect x="266" y="691" width="15" height="4"/><rect x="281" y="689.5" width="16" height="4.5"/><rect x="297" y="689" width="57" height="3.75"/><rect x="354" y="689.5" width="7" height="4.0"/><rect x="361" y="690" width="64" height="4.600000000000023"/><rect x="425" y="689.5" width="16" height="4.0"/><rect x="441" y="689" width="16" height="3.75"/><rect x="457" y="688" width="40" height="3.5"/><rect x="497" y="688" width="9" height="4.75"/><rect x="506" y="689" width="31" height="4.399999999999977"/><rect x="537" y="688" width="33" height="4"/><rect x="570" y="688" width="80" height="3.5"/><rect x="650" y="689" width="15" height="3"/><rect x="665" y="689.5" width="49" height="3.8999999999999773"/><rect x="714" y="690.9" width="16" height="3.7000000000000455"/><rect x="730" y="692" width="16" height="4"/><rect x="746" y="692.75" width="6" height="3.75"/><rect x="752" y="694" width="10" height="3"/><rect x="762" y="694.6" width="55" height="3.1499999999999773"/><rect x="817" y="694" width="9" height="3.75"/><rect x="826" y="692.75" width="31" height="3.75"/><rect x="857" y="694.6" width="49" height="3.1499999999999773"/><rect x="906" y="695" width="39" height="2.75"/><rect x="945" y="694" width="9" height="3.75"/><rect x="954" y="692.75" width="16" height="4.25"/></g><path d="M10,693 l4,5 h-4 z" fill="#B0B0B0"/><g stroke="#0000FF" stroke-width="1" stroke-dasharray="3,3" shape-rendering="crispEdges"><line x1="10" y1="691.5" x2="1234" y2="691.5"/><line x1="10" y1="696.5" x2="1234" y2="696.5"/></g><text x="1237.5" y="698" font-size="11" font-family="Liberation Sans, sans-serif" fill="#000" textLength="36" lengthAdjust="spacingAndGlyphs" >MMR:912</text><text x="1237.5" y="698" font-size="11" font-family="Liberation Sans, sans-serif" fill="#000" textLength="36" lengthAdjust="spacingAndGlyphs" >ABBR:35</text><text x="1237.5" y="698" font-size="11" font-family="Liberation Sans, sans-serif" fill="#000" textLength="36" lengthAdjust="spacingAndGlyphs" >9WB&#160;52t</text><rect x="1235" y="689" width="2" height="1" fill="#000" shape-rendering="crispEdges" /><rect x="1235" y="696" width="2" height="1" fill="#000" shape-rendering="crispEdges" />
<rect x="9" y="699" width="1" height="3" fill="#000" shape-rendering="crispEdges"/><text x="7.7" y="711" font-size="10.3" font-family="Liberation Sans, sans-serif" fill="#000" textLength="50.2" lengthAdjust="spacingAndGlyphs" >13&#160;Oct&#160;2011</text><rect x="73" y="699" width="1" height="3" fill="#000" shape-rendering="crispEdges"/><text x="71.7" y="711" font-size="10.3" font-family="Liberation Sans, sans-serif" fill="#000" textLength="53.3" lengthAdjust="spacingAndGlyphs" >14&#160;Oct&#160;00:00</text><rect x="137" y="699" width="1" height="3" fill="#000" shape-rendering="crispEdges"/><text x="135.7" y="711" font-size="10.3" font-family="Liberation Sans, sans-serif" fill="#000" textLength="53.3" lengthAdjust="spacingAndGlyphs" >14&#160;Oct&#160;00:19</text><rect x="201" y="699" width="1" height="3" fill="#000" shape-rendering="crispEdges"/><text x="199.7" y="711" font-size="10.3" font-family="Liberation Sans, sans-serif" fill="#000" textLength="53.3" lengthAdjust="spacingAndGlyphs" >14&#160;Oct&#160;00:53</text><rect x="265" y="699" width="1" height="3" fill="#000" shape-rendering="crispEdges"/><text x="263.7" y="711" font-size="10.3" font-family="Liberation Sans, sans-serif" fill="#000" textLength="53.3" lengthAdjust="spacingAndGlyphs" >14&#160;Oct&#160;01:33</text><rect x="329" y="699" width="1" height="3" fill="#000" shape-rendering="crispEdges"/><text x="327.7" y="711" font-size="10.3" font-family="Liberation Sans, sans-serif" fill="#000" textLength="53.3" lengthAdjust="spacingAndGlyphs" >14&#160;Oct&#160;01:41</text><rect x="393" y="699" width="1" height="3" fill="#000" shape-rendering="crispEdges"/><text x="391.7" y="711" font-size="10.3" font-family="Liberation Sans, sans-serif" fill="#000" textLength="53.3" lengthAdjust="spacingAndGlyphs" >14&#160;Oct&#160;02:24</text><rect x="457" y="699" width="1" height="3" fill="#000" shape-rendering="crispEdges"/><text x="455.7" y="711" font-size="10.3" font-family="Liberation Sans, sans-serif" fill="#000" textLength="53.3" lengthAdjust="spacingAndGlyphs" >14&#160;Oct&#160;04:10</text><rect x="521" y="699" width="1" height="3" fill="#000" shape-rendering="crispEdges"/><text x="519.7" y="711" font-size="10.3" font-family="Liberation Sans, sans-serif" fill="#000" textLength="53.3" lengthAdjust="spacingAndGlyphs" >14&#160;Oct&#160;04:43</text><rect x="585" y="699" width="1" height="3" fill="#000" shape-rendering="crispEdges"/><text x="583.7" y="711" font-size="10.3" font-family="Liberation Sans, sans-serif" fill="#000" textLength="53.3" lengthAdjust="spacingAndGlyphs" >14&#160;Oct&#160;05:32</text><rect x="649" y="699" width="1" height="3" fill="#000" shape-rendering="crispEdges"/><text x="647.7" y="711" font-size="10.3" font-family="Liberation Sans, sans-serif" fill="#000" textLength="53.3" lengthAdjust="spacingAndGlyphs" >14&#160;Oct&#160;06:09</text><rect x="713" y="699" width="1" height="3" fill="#000" shape-rendering="crispEdges"/><text x="711.7" y="711" font-size="10.3" font-family="Liberation Sans, sans-serif" fill="#000" textLength="53.3" lengthAdjust="spacingAndGlyphs" >14&#160;Oct&#160;06:34</text><rect x="777" y="699" width="1" height="3" fill="#000" shape-rendering="crispEdges"/><text x="775.7" y="711" font-size="10.3" font-family="Liberation Sans, sans-serif" fill="#000" textLength="53.3" lengthAdjust="spacingAndGlyphs" >14&#160;Oct&#160;06:50</text><rect x="841" y="699" width="1" height="3" fill="#000" shape-rendering="crispEdges"/><text x="839.7" y="711" font-size="10.3" font-family="Liberation Sans, sans-serif" fill="#000" textLength="53.3" lengthAdjust="spacingAndGlyphs" >14&#160;Oct&#160;07:25</text><rect x="905" y="699" width="1" height="3" fill="#000" shape-rendering="crispEdges"/><text x="903.7" y="711" font-size="10.3" font-family="Liberation Sans, sans-serif" fill="#000" textLength="53.3" lengthAdjust="spacingAndGlyphs" >14&#160;Oct&#160;07:32</text><rect x="969" y="699" width="1" height="3" fill="#000" shape-rendering="crispEdges"/><text x="967.7" y="711" font-size="10.3" font-family="Liberation Sans, sans-serif" fill="#000" textLength="53.3" lengthAdjust="spacingAndGlyphs" >14&#160;Oct&#160;07:42</text>
<rect x="5" y="717" width="1271" height="1" fill="#F1EFE2" shape-rendering="crispEdges"/>
<rect x="5" y="718" width="1271" height="1" fill="#000" shape-rendering="crispEdges"/>
<rect x="502" y="719" width="774" height="40" fill="#ECE9D8" shape-rendering="crispEdges"/>
<rect x="502" y="738" width="774" height="1" fill="#FFFFFF" shape-rendering="crispEdges"/>
<defs>
<linearGradient id="ig" x1="5" y1="0" x2="501" y2="0" gradientUnits="userSpaceOnUse"><stop offset="0" stop-color="#4A4A4A"/><stop offset="0.4" stop-color="#747474"/><stop offset="0.6" stop-color="#B2B2B2"/><stop offset="0.8" stop-color="#BCBCBC"/><stop offset="1" stop-color="#A2A2A2"/></linearGradient>
<linearGradient id="iv" x1="0" y1="719" x2="0" y2="763" gradientUnits="userSpaceOnUse"><stop offset="0" stop-color="#000" stop-opacity="0"/><stop offset="1" stop-color="#000" stop-opacity="0.25"/></linearGradient>
<linearGradient id="ih" x1="0" y1="719" x2="0" y2="727" gradientUnits="userSpaceOnUse"><stop offset="0" stop-color="#B8B8B8"/><stop offset="0.4" stop-color="#EDEDED"/><stop offset="1" stop-color="#EDEDED" stop-opacity="0"/></linearGradient>
<linearGradient id="ie" x1="40" y1="760" x2="400" y2="730" gradientUnits="userSpaceOnUse"><stop offset="0" stop-color="#444444"/><stop offset="0.5" stop-color="#6A6A6A"/><stop offset="1" stop-color="#9A9A9A"/></linearGradient>
<clipPath id="ic"><rect x="5" y="720" width="496" height="43"/></clipPath>
</defs><g clip-path="url(#ic)"><rect x="5" y="719" width="496" height="44" fill="url(#ig)"/><rect x="5" y="719" width="496" height="44" fill="url(#iv)"/><ellipse cx="220" cy="792" rx="178" ry="63" fill="url(#ie)" stroke="#404040" stroke-opacity="0.6" stroke-width="1.5"/><rect x="5" y="719" width="496" height="8" fill="url(#ih)"/><text x="150" y="771.5" font-size="27" font-family="Liberation Sans, sans-serif" fill="#E4E4E4" textLength="159" lengthAdjust="spacingAndGlyphs" >ONE&#160;CLICKER</text></g><rect x="5" y="718" width="496" height="2" fill="#000" shape-rendering="crispEdges" /><rect x="501" y="718" width="1" height="45" fill="#000" shape-rendering="crispEdges" />
<rect x="584" y="742" width="1" height="16" fill="#C5C2B2" shape-rendering="crispEdges" /><rect x="585" y="742" width="1" height="16" fill="#FFF" shape-rendering="crispEdges" /><rect x="703" y="742" width="1" height="16" fill="#C5C2B2" shape-rendering="crispEdges" /><rect x="704" y="742" width="1" height="16" fill="#FFF" shape-rendering="crispEdges" /><rect x="787" y="742" width="1" height="16" fill="#C5C2B2" shape-rendering="crispEdges" /><rect x="788" y="742" width="1" height="16" fill="#FFF" shape-rendering="crispEdges" /><rect x="870" y="742" width="1" height="16" fill="#C5C2B2" shape-rendering="crispEdges" /><rect x="871" y="742" width="1" height="16" fill="#FFF" shape-rendering="crispEdges" /><rect x="951" y="742" width="1" height="16" fill="#C5C2B2" shape-rendering="crispEdges" /><rect x="952" y="742" width="1" height="16" fill="#FFF" shape-rendering="crispEdges" /><rect x="1034" y="742" width="1" height="16" fill="#C5C2B2" shape-rendering="crispEdges" /><rect x="1035" y="742" width="1" height="16" fill="#FFF" shape-rendering="crispEdges" /><rect x="1115" y="742" width="1" height="16" fill="#C5C2B2" shape-rendering="crispEdges" /><rect x="1116" y="742" width="1" height="16" fill="#FFF" shape-rendering="crispEdges" /><text x="588.7" y="754" font-size="10.8" font-family="Liberation Sans, sans-serif" fill="#000" textLength="88" lengthAdjust="spacingAndGlyphs" >2011.10.14&#160;04:10</text><text x="707.6" y="754" font-size="10.8" font-family="Liberation Sans, sans-serif" fill="#000" textLength="50.5" lengthAdjust="spacingAndGlyphs" >O:&#160;1.3770</text><text x="791.5" y="754" font-size="10.8" font-family="Liberation Sans, sans-serif" fill="#000" textLength="49.5" lengthAdjust="spacingAndGlyphs" >H:&#160;1.3775</text><text x="874.6" y="754" font-size="10.8" font-family="Liberation Sans, sans-serif" fill="#000" textLength="47.5" lengthAdjust="spacingAndGlyphs" >L:&#160;1.3770</text><text x="955.6" y="754" font-size="10.8" font-family="Liberation Sans, sans-serif" fill="#000" textLength="49.5" lengthAdjust="spacingAndGlyphs" >C:&#160;1.3775</text><text x="1038.8" y="754" font-size="10.8" font-family="Liberation Sans, sans-serif" fill="#000" textLength="19.5" lengthAdjust="spacingAndGlyphs" >V:&#160;1</text><text x="1170.7" y="754" font-size="10.8" font-family="Liberation Sans, sans-serif" fill="#000" textLength="37" lengthAdjust="spacingAndGlyphs" >70/0&#160;kb</text><rect x="1120" y="743.0" width="2" height="13.0" fill="#6B8E1E" shape-rendering="crispEdges" /><rect x="1120" y="754" width="2" height="2" fill="#1F4E80" shape-rendering="crispEdges" /><rect x="1123" y="743.3" width="2" height="12.7" fill="#6B8E1E" shape-rendering="crispEdges" /><rect x="1123" y="753" width="2" height="3" fill="#1F4E80" shape-rendering="crispEdges" /><rect x="1126" y="743.6" width="2" height="12.4" fill="#6B8E1E" shape-rendering="crispEdges" /><rect x="1126" y="752" width="2" height="4" fill="#1F4E80" shape-rendering="crispEdges" /><rect x="1129" y="743.9" width="2" height="12.1" fill="#6B8E1E" shape-rendering="crispEdges" /><rect x="1129" y="750" width="2" height="6" fill="#1F4E80" shape-rendering="crispEdges" /><rect x="1132" y="744.2" width="2" height="11.8" fill="#6B8E1E" shape-rendering="crispEdges" /><rect x="1132" y="749" width="2" height="7" fill="#1F4E80" shape-rendering="crispEdges" /><rect x="1135" y="744.5" width="2" height="11.5" fill="#6B8E1E" shape-rendering="crispEdges" /><rect x="1135" y="748" width="2" height="8" fill="#1F4E80" shape-rendering="crispEdges" /><rect x="1138" y="744.8" width="2" height="11.2" fill="#6B8E1E" shape-rendering="crispEdges" /><rect x="1138" y="746" width="2" height="10" fill="#1F4E80" shape-rendering="crispEdges" /><rect x="1141" y="745.1" width="2" height="10.9" fill="#6B8E1E" shape-rendering="crispEdges" /><rect x="1141" y="745" width="2" height="11" fill="#1F4E80" shape-rendering="crispEdges" /><path d="M1251,725 v7 l-3.5,-3.5 z M1265,725 v7 l3.5,-3.5 z" fill="#A0A0A0"/><path d="M1262,758 l13,-13 M1266,758 l9,-9 M1270,758 l5,-5" stroke="#FFF" stroke-width="1"/><path d="M1263,758 l12,-12 M1267,758 l8,-8 M1271,758 l4,-4" stroke="#A8A490" stroke-width="1"/>
<rect x="502" y="759" width="774" height="2" fill="#0038E6" shape-rendering="crispEdges"/><rect x="502" y="761" width="774" height="1" fill="#2E70D8" shape-rendering="crispEdges"/><rect x="502" y="762" width="774" height="1" fill="#3A8CEC" shape-rendering="crispEdges"/>
</svg>
</body></html>
